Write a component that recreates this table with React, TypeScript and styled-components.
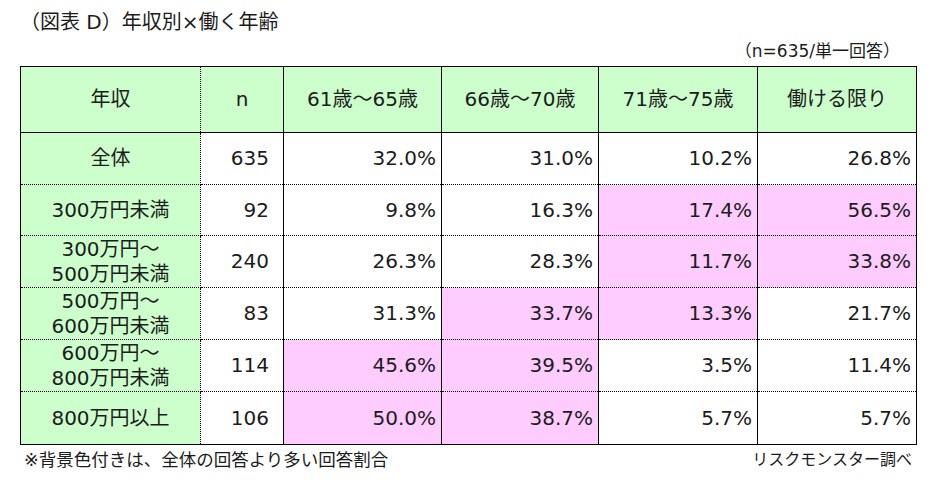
import * as React from 'react'
import styled, { createGlobalStyle } from 'styled-components'

const GlobalStyle = createGlobalStyle`
    body {
        margin: 0;
        background: #ffffff;
        font-family: 'DejaVu Sans', 'Noto Sans CJK JP', sans-serif;
        color: #1c1c1c;
    }
`

const green = '#ccffcc'
const pink = '#ffccff'

const Page = styled.div`
    width: 930px;
    height: 480px;
    padding: 10px 0 0 20px;
    box-sizing: border-box;
    display: flex;
    flex-direction: column;
`

const Title = styled.div`
    font-size: 20px;
    line-height: 24px;
    height: 24px;
`

const SampleNote = styled.div`
    width: 896px;
    padding-right: 16px;
    box-sizing: border-box;
    text-align: right;
    font-size: 17px;
    line-height: 20px;
    margin-top: 7px;
`

const Table = styled.table`
    margin-top: 5px;
    width: 896px;
    table-layout: fixed;
    border-collapse: collapse;
    border: 1px solid #000;
    font-size: 20px;
    line-height: 25px;
`

const HeadCell = styled.th<{ $dottedRight?: boolean; $dottedLeft?: boolean }>`
    height: 65px;
    padding: 0;
    font-weight: normal;
    text-align: center;
    background: ${green};
    border-top: 1px solid #000;
    border-bottom: 1px solid #000;
    border-left: 1px ${p => (p.$dottedLeft ? 'dotted' : 'solid')} #000;
    border-right: 1px ${p => (p.$dottedRight ? 'dotted' : 'solid')} #000;
`

const LabelCell = styled.td<{ $h: number }>`
    height: ${p => p.$h}px;
    padding: 0;
    text-align: center;
    background: ${green};
    border-top: 1px dotted #000;
    border-bottom: 1px dotted #000;
    border-left: 1px solid #000;
    border-right: 1px dotted #000;
`

const CountCell = styled.td`
    padding: 0 14px 0 0;
    text-align: right;
    background: #fff;
    border-top: 1px dotted #000;
    border-bottom: 1px dotted #000;
    border-left: 1px dotted #000;
    border-right: 1px solid #000;
`

const ValueCell = styled.td<{ $hl?: boolean }>`
    padding: 0 5px 0 0;
    text-align: right;
    background: ${p => (p.$hl ? pink : '#fff')};
    border-top: 1px dotted #000;
    border-bottom: 1px dotted #000;
    border-left: 1px solid #000;
    border-right: 1px solid #000;
`

const FirstRow = styled.tr`
    & > td {
        border-top: 1px solid #000;
    }
`

const Footer = styled.div`
    width: 896px;
    display: flex;
    justify-content: space-between;
    align-items: center;
    margin-top: 4px;
    padding: 0 4px 0 4px;
    box-sizing: border-box;
    line-height: 22px;
`

const FootNote = styled.span`
    font-size: 17.5px;
`

const Source = styled.span`
    font-size: 16px;
`

const widths = [180, 83, 158, 157, 159, 159]
const headers = ['n', '61歳～65歳', '66歳～70歳', '71歳～75歳', '働ける限り']

interface Row {
    label: React.ReactNode
    n: number
    values: string[]
    hl: boolean[]
    h: number
}

const rows: Row[] = [
    { label: '全体', n: 635, values: ['32.0%', '31.0%', '10.2%', '26.8%'], hl: [false, false, false, false], h: 51 },
    { label: '300万円未満', n: 92, values: ['9.8%', '16.3%', '17.4%', '56.5%'], hl: [false, false, true, true], h: 50 },
    { label: <>300万円～<br />500万円未満</>, n: 240, values: ['26.3%', '28.3%', '11.7%', '33.8%'], hl: [false, false, true, true], h: 51 },
    { label: <>500万円～<br />600万円未満</>, n: 83, values: ['31.3%', '33.7%', '13.3%', '21.7%'], hl: [false, true, true, false], h: 51 },
    { label: <>600万円～<br />800万円未満</>, n: 114, values: ['45.6%', '39.5%', '3.5%', '11.4%'], hl: [true, true, false, false], h: 51 },
    { label: '800万円以上', n: 106, values: ['50.0%', '38.7%', '5.7%', '5.7%'], hl: [true, true, false, false], h: 52 },
]

const App = () => {
    return (
        <Page>
            <GlobalStyle />
            <Title>（図表 D）年収別×働く年齢</Title>
            <SampleNote>（n=635/単一回答）</SampleNote>
            <Table>
                <colgroup>
                    {widths.map((w, i) => (
                        <col key={i} style={{ width: w }} />
                    ))}
                </colgroup>
                <thead>
                    <tr>
                        <HeadCell $dottedRight>年収</HeadCell>
                        {headers.map((h, i) => (
                            <HeadCell key={h} $dottedLeft={i === 0}>
                                {h}
                            </HeadCell>
                        ))}
                    </tr>
                </thead>
                <tbody>
                    {rows.map((row, r) => {
                        const cells = (
                            <>
                                <LabelCell $h={row.h}>{row.label}</LabelCell>
                                <CountCell>{row.n}</CountCell>
                                {row.values.map((v, i) => (
                                    <ValueCell key={i} $hl={row.hl[i]}>
                                        {v}
                                    </ValueCell>
                                ))}
                            </>
                        )
                        return r === 0 ? (
                            <FirstRow key={r}>{cells}</FirstRow>
                        ) : (
                            <tr key={r}>{cells}</tr>
                        )
                    })}
                </tbody>
            </Table>
            <Footer>
                <FootNote>※背景色付きは、全体の回答より多い回答割合</FootNote>
                <Source>リスクモンスター調べ</Source>
            </Footer>
        </Page>
    )
}

export default App
